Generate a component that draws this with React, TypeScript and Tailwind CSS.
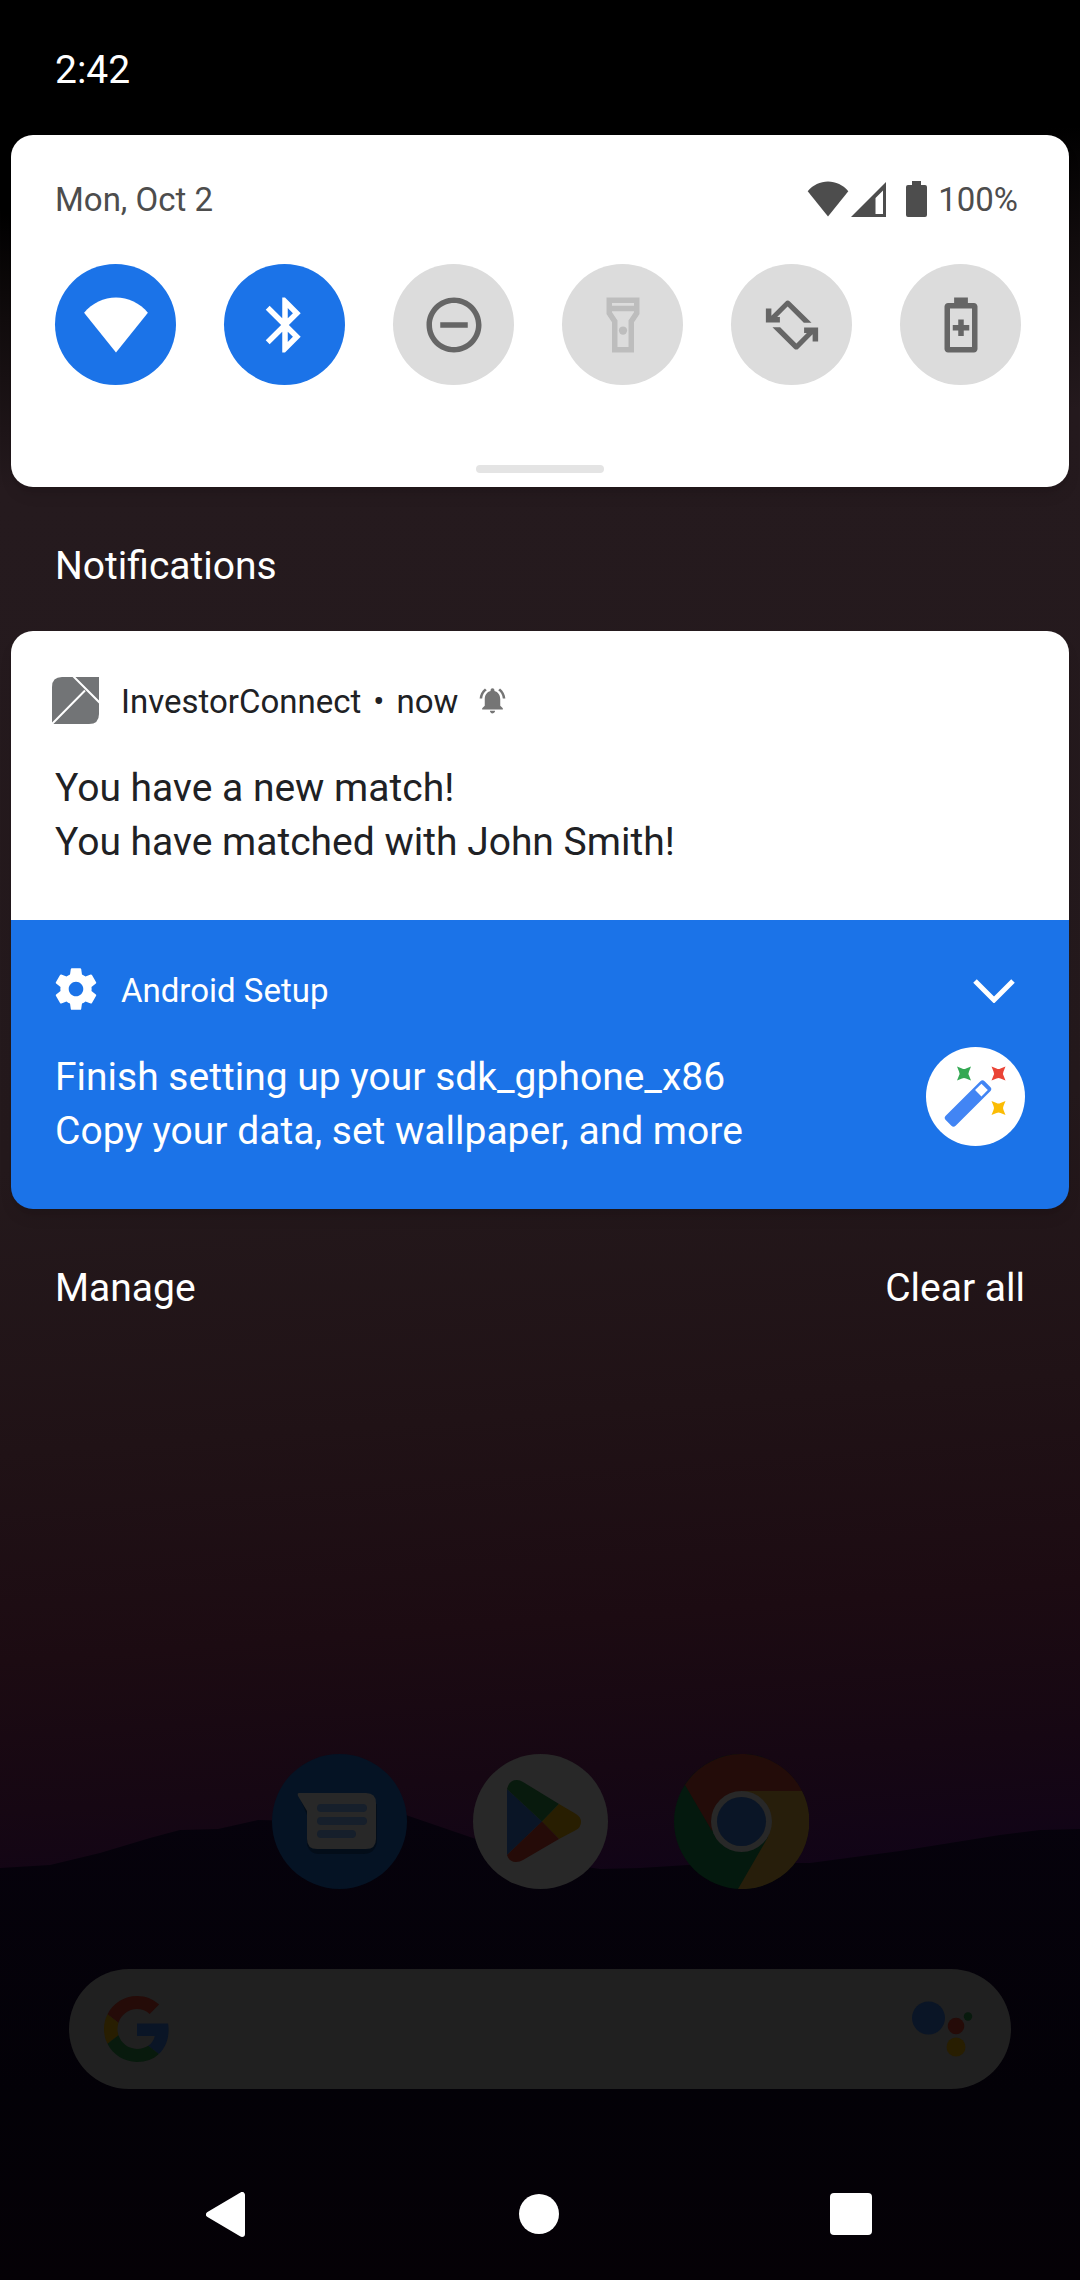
import type { ReactNode } from "react";

function Icon({ className, children }: { className: string; children: ReactNode }) {
  return (
    <svg viewBox="0 0 24 24" className={className} fill="currentColor" aria-hidden="true">
      {children}
    </svg>
  );
}

const WIFI = "M12 22L.4 7.5C3.3 4.1 7.6 2 12 2s8.7 2.1 11.6 5.5z";
const ROTATE = "M2.5 6h2v2.6l5.1-5.1a1.2 1.2 0 0 1 1.7 0L19.1 11.2h-2.8L10.4 5.3 6.6 9.1h1v2h-5.1z";

const tiles: { label: string; tone: string; icon: ReactNode }[] = [
  { label: "Wi-Fi", tone: "bg-[#1b73e8] text-white", icon: <path d={WIFI} /> },
  {
    label: "Bluetooth",
    tone: "bg-[#1b73e8] text-white",
    icon: (
      <path d="M17.71 7.71L12 2h-1v7.59L6.41 5 5 6.41 10.59 12 5 17.59 6.41 19 11 14.41V22h1l5.71-5.71-4.3-4.29 4.3-4.29zM13 5.83l1.88 1.88L13 9.59V5.83zm1.88 10.46L13 18.17v-3.76l1.88 1.88z" />
    ),
  },
  {
    label: "Do not disturb",
    tone: "bg-[#dcdcdc] text-[#666666]",
    icon: (
      <path d="M7 11v2h10v-2H7zm5-9C6.48 2 2 6.48 2 12s4.48 10 10 10 10-4.48 10-10S17.52 2 12 2zm0 18c-4.41 0-8-3.59-8-8s3.59-8 8-8 8 3.59 8 8-3.59 8-8 8z" />
    ),
  },
  {
    label: "Flashlight",
    tone: "bg-[#dcdcdc] text-[#bdbdbd]",
    icon: (
      <>
        <path fillRule="evenodd" d="M6 2h12v6l-2 3v11H8V11L6 8zM8 4v1h8V4zM8 7v.4l2 3V20h4v-9.6l2-3V7z" />
        <circle cx="12" cy="14" r="1.5" />
      </>
    ),
  },
  {
    label: "Auto-rotate",
    tone: "bg-[#dcdcdc] text-[#666666]",
    icon: (
      <>
        <path d={ROTATE} />
        <path d={ROTATE} transform="rotate(180 12 12)" />
      </>
    ),
  },
  {
    label: "Battery Saver",
    tone: "bg-[#dcdcdc] text-[#666666]",
    icon: (
      <path
        fillRule="evenodd"
        d="M9.5 2h5v2h2.2c.7 0 1.3.6 1.3 1.3v15.4c0 .7-.6 1.3-1.3 1.3H7.3c-.7 0-1.3-.6-1.3-1.3V5.3C6 4.6 6.6 4 7.3 4h2.2zM8 6v14h8V6zM11 10h2v2h2v2h-2v2h-2v-2H9v-2h2z"
      />
    ),
  },
];

function Wallpaper() {
  return (
    <svg
      className="absolute inset-0 h-full w-full"
      viewBox="0 0 1080 2280"
      preserveAspectRatio="none"
      aria-hidden="true"
    >
      <defs>
        <linearGradient id="sky" gradientUnits="userSpaceOnUse" x1="480" y1="0" x2="620" y2="1880">
          <stop offset="0" stopColor="#000000" />
          <stop offset="0.09" stopColor="#000000" />
          <stop offset="0.15" stopColor="#110c0d" />
          <stop offset="0.24" stopColor="#251a1e" />
          <stop offset="0.6" stopColor="#24191c" />
          <stop offset="0.75" stopColor="#201216" />
          <stop offset="0.86" stopColor="#1c0b12" />
          <stop offset="0.94" stopColor="#160713" />
          <stop offset="1" stopColor="#110417" />
        </linearGradient>
        <linearGradient id="hill" x1="0" y1="0" x2="0" y2="1">
          <stop offset="0" stopColor="#06020c" />
          <stop offset="0.6" stopColor="#030107" />
          <stop offset="1" stopColor="#050106" />
        </linearGradient>
      </defs>
      <rect width="1080" height="2280" fill="url(#sky)" />
      <path
        fill="url(#hill)"
        d="M0 1868L50 1865 100 1853 150 1838 180 1830 218 1829 258 1820 300 1821 400 1813 470 1837 540 1860 600 1869 640 1868 720 1863 810 1863 900 1851 1000 1835 1040 1830 1080 1829V2280H0z"
      />
    </svg>
  );
}

function MessagesLogo() {
  return (
    <svg viewBox="0 0 135 135" className="size-full" aria-hidden="true">
      <circle cx="67.5" cy="67.5" r="67.5" fill="#051324" />
      <path d="M27 42l78 8v38q-2 12-14 12H47q-9 0-12-9V61z" fill="#030d19" />
      <path d="M27 39H94q10 0 10 10v36q0 10-10 10H45q-10 0-10-10V57L26 42q-1-3 1-3z" fill="#282828" />
      <g stroke="#161f2b" strokeWidth="8" strokeLinecap="round">
        <path d="M49 54H91M49 67H91M49 80H80" />
      </g>
    </svg>
  );
}

function PlayLogo() {
  return (
    <svg viewBox="0 0 135 135" className="size-full" aria-hidden="true">
      <circle cx="67.5" cy="67.5" r="67.5" fill="#282828" />
      <path d="M34 35L69 67.5 34 101z" fill="#0a1526" />
      <path d="M34 35q2-9 10-9 3 0 6 2L86 50 69 67.5z" fill="#081a0d" />
      <path d="M86 50l17 10q5 3 5 8t-5 8L86 85 69 67.5z" fill="#281e01" />
      <path d="M34 101q2 7 9 7 4 0 7-2L86 85 69 67.5z" fill="#250b08" />
    </svg>
  );
}

function ChromeLogo() {
  return (
    <svg viewBox="0 0 135 135" className="size-full" aria-hidden="true">
      <circle cx="67.5" cy="67.5" r="67.5" fill="#04190e" />
      <path d="M11 31A67.5 67.5 0 0 1 128 37H67.5L38 77z" fill="#230c09" />
      <path d="M128 37A67.5 67.5 0 0 1 64 135L94 83 67.5 37z" fill="#271e0b" />
      <circle cx="67.5" cy="67.5" r="30.5" fill="#282828" />
      <circle cx="67.5" cy="67.5" r="24.5" fill="#0a1526" />
    </svg>
  );
}

function GoogleLogo() {
  return (
    <svg viewBox="0 0 48 48" className="size-[66px]" aria-hidden="true">
      <path
        fill="#250b08"
        d="M24 9.5c3.54 0 6.71 1.22 9.21 3.6l6.85-6.85C35.9 2.38 30.47 0 24 0 14.62 0 6.51 5.38 2.56 13.22l7.98 6.19C12.43 13.72 17.74 9.5 24 9.5z"
      />
      <path
        fill="#0a1526"
        d="M46.98 24.55c0-1.57-.15-3.09-.38-4.55H24v9.02h12.94c-.58 2.96-2.26 5.48-4.78 7.18l7.73 6c4.51-4.18 7.09-10.36 7.09-17.65z"
      />
      <path
        fill="#281e01"
        d="M10.53 28.59c-.48-1.45-.76-2.99-.76-4.59s.27-3.14.76-4.59l-7.98-6.19C.92 16.46 0 20.12 0 24c0 3.88.92 7.54 2.56 10.78l7.97-6.19z"
      />
      <path
        fill="#081a0d"
        d="M24 48c6.48 0 11.93-2.13 15.89-5.81l-7.73-6c-2.15 1.45-4.92 2.3-8.16 2.3-6.26 0-11.57-4.22-13.47-9.91l-7.98 6.19C6.51 42.62 14.62 48 24 48z"
      />
    </svg>
  );
}

function AssistantLogo() {
  return (
    <svg viewBox="0 0 62 62" className="size-[62px]" aria-hidden="true">
      <circle cx="17.5" cy="20" r="16.5" fill="#0a1526" />
      <circle cx="45" cy="28" r="8.3" fill="#250b08" />
      <circle cx="45" cy="49" r="9.5" fill="#281e01" />
      <circle cx="57" cy="18.5" r="4.2" fill="#081a0d" />
    </svg>
  );
}

function WandLogo() {
  const star = "M-7-7L-2-5Q0-4 2-5L7-7 5-2Q4 0 5 2L7 7 2 5Q0 4-2 5L-7 7-5 2Q-4 0-5-2z";
  return (
    <svg viewBox="0 0 99 99" className="size-[99px] shrink-0" aria-hidden="true">
      <circle cx="49.5" cy="49.5" r="49.5" fill="#ffffff" />
      <path d={star} transform="translate(38 26.5)" fill="#34a853" />
      <path d={star} transform="translate(72.5 26.5)" fill="#ea4335" />
      <path d={star} transform="translate(72.5 61)" fill="#fbbc04" />
      <g transform="rotate(45 42 56.5)">
        <rect x="35" y="29" width="14" height="55" rx="3" fill="#4285f4" />
        <rect x="37.5" y="33" width="9" height="9" fill="#ffffff" />
      </g>
    </svg>
  );
}

export default function App() {
  return (
    <div className="relative isolate flex min-h-screen flex-col bg-black font-['Roboto',sans-serif] text-[39px] leading-[54px] text-white">
      <Wallpaper />

      <header className="relative flex h-[135px] items-center px-[55px] pt-[4px]">
        <time>2:42</time>
      </header>

      <section
        aria-label="Quick settings"
        className="relative mx-[11px] flex flex-col rounded-[22px] bg-white px-[44px] pt-[42px] pb-[14px] text-[#4d4d4d] shadow-lg"
      >
        <div className="flex h-[44px] items-center text-[33px] leading-[44px]">
          <span className="flex-1 pt-[2px]">Mon, Oct 2</span>
          <Icon className="size-[42px]">
            <path d={WIFI} />
          </Icon>
          <svg viewBox="0 0 35 35" className="ml-[2px] size-[35px]" fill="currentColor" aria-hidden="true">
            <path fillRule="evenodd" d="M0 35L35 0V35zM24.5 16V32H32V8.5z" />
          </svg>
          <svg viewBox="0 0 21 36" className="ml-[20px] h-[36px] w-[21px]" fill="currentColor" aria-hidden="true">
            <path d="M6 0h9v4h4q2 0 2 2v28q0 2-2 2H2q-2 0-2-2V6q0-2 2-2h4z" />
          </svg>
          <span className="mr-[7px] ml-[11px] pt-[2px]">100%</span>
        </div>
        <div className="mt-[43px] mr-[4px] flex justify-between">
          {tiles.map((tile) => (
            <button
              key={tile.label}
              type="button"
              aria-label={tile.label}
              className={`flex size-[121px] items-center justify-center rounded-full ${tile.tone}`}
            >
              <Icon className="size-[66px]">{tile.icon}</Icon>
            </button>
          ))}
        </div>
        <div className="mt-20 h-2 w-32 self-center rounded-full bg-[#e4e4e4]" />
      </section>

      <h2 className="relative px-[55px] pt-[52px] pb-[38px]">Notifications</h2>

      <section
        aria-label="Notification list"
        className="relative mx-[11px] overflow-hidden rounded-[22px] shadow-lg"
      >
        <article className="h-[289px] bg-white px-[44px] pt-[44px] text-[#202124]">
          <div className="flex h-[50px] items-center text-[33px] leading-[44px]">
            <svg viewBox="0 0 47 47" className="-ml-[3px] size-[47px]" aria-hidden="true">
              <path d="M10 0H47V37q0 10-10 10H0V10Q0 0 10 0z" fill="#727476" />
              <path d="M20-2L48 26M33 13.5L0 47" stroke="#ffffff" strokeWidth="2" fill="none" />
            </svg>
            <span className="ml-[22px] pt-[4px]">InvestorConnect</span>
            <span className="mx-[12px] pt-[4px]">•</span>
            <span className="pt-[4px]">now</span>
            <Icon className="ml-[19px] size-[31px] text-[#757575]">
              <path d="M7.58 4.08L6.15 2.65C3.75 4.48 2.17 7.3 2.03 10.5h2c.15-2.65 1.51-4.97 3.55-6.42zm12.39 6.42h2c-.15-3.2-1.73-6.02-4.12-7.85l-1.42 1.43c2.02 1.45 3.39 3.77 3.54 6.42zM18 11c0-3.07-1.64-5.64-4.5-6.32V4c0-.83-.67-1.5-1.5-1.5s-1.5.67-1.5 1.5v.68C7.63 5.36 6 7.92 6 11v5l-2 2v1h16v-1l-2-2v-5zm-6 11c.14 0 .27-.01.4-.04.65-.14 1.18-.58 1.44-1.18.1-.24.15-.5.15-.78h-4c.01 1.1.9 2 2.01 2z" />
            </Icon>
          </div>
          <h3 className="mt-9">You have a new match!</h3>
          <p>You have matched with John Smith!</p>
        </article>

        <article className="h-[289px] bg-[#1b73e8] px-[44px] pt-[44px]">
          <div className="flex h-[50px] items-center text-[33px] leading-[44px]">
            <Icon className="-ml-[4px] size-[50px]">
              <path d="M19.43 12.98c.04-.32.07-.64.07-.98s-.03-.66-.07-.98l2.11-1.65c.19-.15.24-.42.12-.64l-2-3.46c-.12-.22-.39-.3-.61-.22l-2.49 1c-.52-.4-1.08-.73-1.69-.98l-.38-2.65C14.46 2.18 14.25 2 14 2h-4c-.25 0-.46.18-.49.42l-.38 2.65c-.61.25-1.17.59-1.69.98l-2.49-1c-.23-.09-.49 0-.61.22l-2 3.46c-.13.22-.07.49.12.64l2.11 1.65c-.04.32-.07.65-.07.98s.03.66.07.98l-2.11 1.65c-.19.15-.24.42-.12.64l2 3.46c.12.22.39.3.61.22l2.49-1c.52.4 1.08.73 1.69.98l.38 2.65c.03.24.24.42.49.42h4c.25 0 .46-.18.49-.42l.38-2.65c.61-.25 1.17-.59 1.69-.98l2.49 1c.23.09.49 0 .61-.22l2-3.46c.12-.22.07-.49-.12-.64l-2.11-1.65zM12 15.5c-1.93 0-3.5-1.57-3.5-3.5s1.57-3.5 3.5-3.5 3.5 1.57 3.5 3.5-1.57 3.5-3.5 3.5z" />
            </Icon>
            <span className="ml-[20px] flex-1 pt-[4px]">Android Setup</span>
            <button type="button" aria-label="Expand" className="mr-[10px] pt-[4px]">
              <svg viewBox="0 0 42 24" className="h-[24px] w-[42px]" aria-hidden="true">
                <path d="M2 2L21 21 40 2" stroke="#ffffff" strokeWidth="5" fill="none" />
              </svg>
            </button>
          </div>
          <div className="mt-[33px] flex justify-between">
            <div className="pt-[3px]">
              <h3>Finish setting up your sdk_gphone_x86</h3>
              <p>Copy your data, set wallpaper, and more</p>
            </div>
            <WandLogo />
          </div>
        </article>
      </section>

      <div className="relative flex justify-between px-[55px] pt-[52px]">
        <button type="button">Manage</button>
        <button type="button">Clear all</button>
      </div>

      <div className="relative mt-auto flex flex-col">
        <div className="flex justify-center gap-[66px]">
          <button type="button" aria-label="Messages" className="size-[135px]">
            <MessagesLogo />
          </button>
          <button type="button" aria-label="Play Store" className="size-[135px]">
            <PlayLogo />
          </button>
          <button type="button" aria-label="Chrome" className="size-[135px]">
            <ChromeLogo />
          </button>
        </div>

        <div className="mx-[69px] mt-20 flex h-[120px] items-center justify-between rounded-full bg-[#202020] pr-[38px] pl-[35px]">
          <button type="button" aria-label="Google search">
            <GoogleLogo />
          </button>
          <button type="button" aria-label="Voice assistant">
            <AssistantLogo />
          </button>
        </div>

        <nav className="mt-[59px] flex h-[132px] items-center justify-between pr-[208px] pl-[206px]">
          <button type="button" aria-label="Back" className="w-[42px]">
            <svg viewBox="0 0 39 45" className="h-[45px] w-[39px]" aria-hidden="true">
              <path
                d="M3 22.5L36 3V42z"
                fill="#ffffff"
                stroke="#ffffff"
                strokeWidth="6"
                strokeLinejoin="round"
              />
            </svg>
          </button>
          <button type="button" aria-label="Home" className="size-[40px] rounded-full bg-white" />
          <button type="button" aria-label="Overview" className="size-[42px] rounded-[4px] bg-white" />
        </nav>
      </div>
    </div>
  );
}
